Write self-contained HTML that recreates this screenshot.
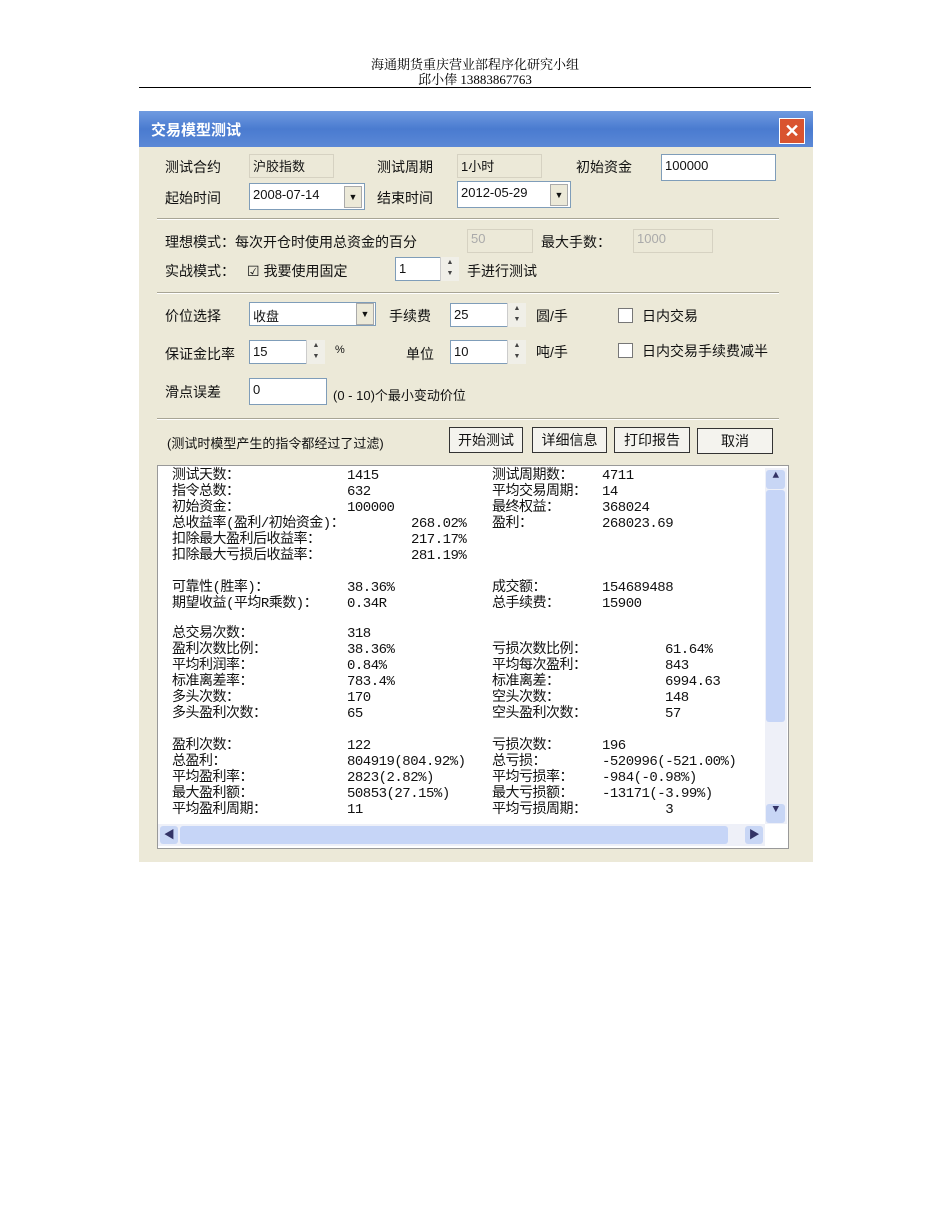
<!DOCTYPE html>
<html><head><meta charset="utf-8"><style>
body{margin:0;width:950px;height:1230px;background:#fff;position:relative;font-family:"Liberation Serif","Noto Serif CJK SC",serif;overflow:hidden}
.a{position:absolute;white-space:nowrap}
.hd{font-size:13px;color:#000;left:0;width:950px;text-align:center}
#dlg{position:absolute;left:139px;top:111px;width:674px;height:751px;background:#ece9d8;font-family:"Liberation Sans","Noto Sans CJK SC",sans-serif;font-size:14px;color:#111}
#tb{position:absolute;left:0;top:0;width:674px;height:36px;background:linear-gradient(#6f9be0,#4a7bd0 50%,#5b88d6)}
.in{position:absolute;background:#fff;border:1px solid #7f9db9;height:24px;box-sizing:border-box;font-size:13px;padding:3px 3px}
.ro{position:absolute;background:#ece9d8;border:1px solid #d6d2c2;height:24px;box-sizing:border-box;font-size:13px;padding:1px 3px}
.sp{position:absolute;width:18px;height:24px;border-left:1px solid #ccc;background:#f0efe8;font-size:7px;line-height:11px;text-align:center;color:#444}
.dd{position:absolute;width:18px;height:22px;background:#ece9d8;border:1px solid #aaa;box-sizing:border-box;font-size:9px;text-align:center;line-height:20px}
.sep{position:absolute;left:18px;width:622px;height:0;border-top:1px solid #a8a595;border-bottom:1px solid #fff}
.btn{position:absolute;height:26px;border:1px solid #333;box-sizing:border-box;background:#f4f3ee;text-align:center;line-height:24px;font-size:14px}
.cb{position:absolute;width:13px;height:13px;border:1px solid #777;background:#fff}
#ta{position:absolute;left:18px;top:354px;width:630px;height:382px;background:#fff;border:1px solid #999}
#ta .a{font-size:14px;font-family:"Liberation Mono","Noto Sans CJK SC",monospace;letter-spacing:-0.5px}
</style></head><body>
<div class="a hd" style="top:54px">海通期货重庆营业部程序化研究小组</div>
<div class="a hd" style="top:69px">邱小俸 13883867763</div>
<div class="a" style="left:139px;top:87px;width:672px;border-top:1px solid #000"></div>
<div id="dlg">
<div id="tb"></div>
<div class="a" style="left:12px;top:8px;color:#fff;font-weight:bold;font-size:15px">交易模型测试</div>
<div class="a" style="left:640px;top:7px;width:24px;height:24px;background:#d9532f;border:1px solid #fff;color:#fff;text-align:center;line-height:24px;font-weight:bold;font-size:18px">✕</div>

<div class="a" style="left:26px;top:46px">测试合约</div>
<div class="ro" style="left:110px;top:43px;width:85px">沪胶指数</div>
<div class="a" style="left:238px;top:46px">测试周期</div>
<div class="ro" style="left:318px;top:43px;width:85px">1小时</div>
<div class="a" style="left:437px;top:46px">初始资金</div>
<div class="in" style="left:522px;top:43px;width:115px;height:27px">100000</div>
<div class="a" style="left:26px;top:77px">起始时间</div>
<div class="in" style="left:110px;top:72px;width:116px;height:27px">2008-07-14</div>
<div class="dd" style="left:205px;top:75px">▼</div>
<div class="a" style="left:238px;top:77px">结束时间</div>
<div class="in" style="left:318px;top:70px;width:114px;height:27px">2012-05-29</div>
<div class="dd" style="left:411px;top:73px">▼</div>
<div class="sep" style="top:107px"></div>

<div class="a" style="left:26px;top:121px">理想模式：每次开仓时使用总资金的百分</div>
<div class="ro" style="left:328px;top:118px;width:66px;color:#aaa">50</div>
<div class="a" style="left:402px;top:121px">最大手数：</div>
<div class="ro" style="left:494px;top:118px;width:80px;color:#aaa">1000</div>
<div class="a" style="left:26px;top:150px">实战模式：</div>
<div class="a" style="left:108px;top:150px">☑ 我要使用固定</div>
<div class="in" style="left:256px;top:146px;width:64px">1</div>
<div class="sp" style="left:301px;top:146px">▲<br>▼</div>
<div class="a" style="left:328px;top:150px">手进行测试</div>
<div class="sep" style="top:181px"></div>

<div class="a" style="left:26px;top:195px">价位选择</div>
<div class="in" style="left:110px;top:191px;width:127px">收盘</div>
<div class="dd" style="left:217px;top:192px">▼</div>
<div class="a" style="left:250px;top:195px">手续费</div>
<div class="in" style="left:311px;top:192px;width:76px">25</div>
<div class="sp" style="left:368px;top:192px">▲<br>▼</div>
<div class="a" style="left:397px;top:195px">圆/手</div>
<div class="cb" style="left:479px;top:197px"></div>
<div class="a" style="left:503px;top:195px">日内交易</div>
<div class="a" style="left:26px;top:233px">保证金比率</div>
<div class="in" style="left:110px;top:229px;width:76px">15</div>
<div class="sp" style="left:167px;top:229px">▲<br>▼</div>
<div class="a" style="left:196px;top:233px;font-size:11px">%</div>
<div class="a" style="left:267px;top:233px">单位</div>
<div class="in" style="left:311px;top:229px;width:76px">10</div>
<div class="sp" style="left:368px;top:229px">▲<br>▼</div>
<div class="a" style="left:397px;top:231px">吨/手</div>
<div class="cb" style="left:479px;top:232px"></div>
<div class="a" style="left:503px;top:230px">日内交易手续费减半</div>
<div class="a" style="left:26px;top:271px">滑点误差</div>
<div class="in" style="left:110px;top:267px;width:78px;height:27px">0</div>
<div class="a" style="left:194px;top:274px;font-size:13px">(0 - 10)个最小变动价位</div>
<div class="sep" style="top:307px"></div>

<div class="a" style="left:28px;top:322px;font-size:13px">(测试时模型产生的指令都经过了过滤)</div>
<div class="btn" style="left:310px;top:316px;width:74px">开始测试</div>
<div class="btn" style="left:393px;top:316px;width:75px">详细信息</div>
<div class="btn" style="left:475px;top:316px;width:76px">打印报告</div>
<div class="btn" style="left:558px;top:317px;width:76px">取消</div>

<div id="ta">
<div class="a" style="left:14px;top:2px;line-height:16px">测试天数：<br>指令总数：<br>初始资金：<br>总收益率(盈利/初始资金)：<br>扣除最大盈利后收益率：<br>扣除最大亏损后收益率：</div>
<div class="a" style="left:189px;top:2px;line-height:16px">1415<br>632<br>100000</div>
<div class="a" style="left:253px;top:50px;line-height:16px">268.02%<br>217.17%<br>281.19%</div>
<div class="a" style="left:334px;top:2px;line-height:16px">测试周期数：<br>平均交易周期：<br>最终权益：<br>盈利：</div>
<div class="a" style="left:444px;top:2px;line-height:16px">4711<br>14<br>368024<br>268023.69</div>
<div class="a" style="left:14px;top:114px;line-height:16px">可靠性(胜率)：<br>期望收益(平均R乘数)：</div>
<div class="a" style="left:189px;top:114px;line-height:16px">38.36%<br>0.34R</div>
<div class="a" style="left:334px;top:114px;line-height:16px">成交额：<br>总手续费：</div>
<div class="a" style="left:444px;top:114px;line-height:16px">154689488<br>15900</div>
<div class="a" style="left:14px;top:160px;line-height:16px">总交易次数：<br>盈利次数比例：<br>平均利润率：<br>标准离差率：<br>多头次数：<br>多头盈利次数：</div>
<div class="a" style="left:189px;top:160px;line-height:16px">318<br>38.36%<br>0.84%<br>783.4%<br>170<br>65</div>
<div class="a" style="left:334px;top:176px;line-height:16px">亏损次数比例：<br>平均每次盈利：<br>标准离差：<br>空头次数：<br>空头盈利次数：</div>
<div class="a" style="left:507px;top:176px;line-height:16px">61.64%<br>843<br>6994.63<br>148<br>57</div>
<div class="a" style="left:14px;top:272px;line-height:16px">盈利次数：<br>总盈利：<br>平均盈利率：<br>最大盈利额：<br>平均盈利周期：</div>
<div class="a" style="left:189px;top:272px;line-height:16px">122<br>804919(804.92%)<br>2823(2.82%)<br>50853(27.15%)<br>11</div>
<div class="a" style="left:334px;top:272px;line-height:16px">亏损次数：<br>总亏损：<br>平均亏损率：<br>最大亏损额：<br>平均亏损周期：</div>
<div class="a" style="left:444px;top:272px;line-height:16px">196<br>-520996(-521.00%)<br>-984(-0.98%)<br>-13171(-3.99%)<br>&nbsp;&nbsp;&nbsp;&nbsp;&nbsp;&nbsp;&nbsp;&nbsp;3</div>
<div class="a" style="left:607px;top:2px;width:22px;height:356px;background:#eef0f8"></div>
<div class="a" style="left:608px;top:4px;width:19px;height:19px;background:#c8d6f5;border-radius:3px;text-align:center;font-size:11px;color:#336">▲</div>
<div class="a" style="left:608px;top:24px;width:19px;height:232px;background:#c6d5f7;border-radius:3px"></div>
<div class="a" style="left:608px;top:338px;width:19px;height:19px;background:#c8d6f5;border-radius:3px;text-align:center;font-size:11px;color:#336">▼</div>
<div class="a" style="left:0;top:358px;width:607px;height:22px;background:#eef0f8"></div>
<div class="a" style="left:2px;top:360px;width:18px;height:18px;background:#c8d6f5;border-radius:3px;text-align:center;font-size:11px;color:#336">◀</div>
<div class="a" style="left:22px;top:360px;width:548px;height:18px;background:#c6d5f7;border-radius:3px"></div>
<div class="a" style="left:587px;top:360px;width:18px;height:18px;background:#c8d6f5;border-radius:3px;text-align:center;font-size:11px;color:#336">▶</div>
</div>
</div>
</body></html>
